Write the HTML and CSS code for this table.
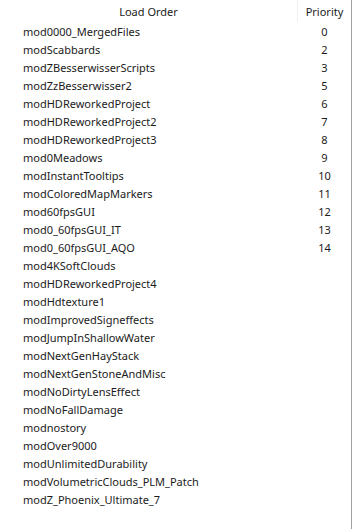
FILE: index.html
```html
<!DOCTYPE html>
<html>
<head>
<meta charset="utf-8">
<link rel="stylesheet" href="styles.css">
</head>
<body>
<div class="list">
  <div class="head">
    <div class="hcell name">Load Order</div>
    <div class="hcell prio">Priority</div>
  </div>
  <div class="rows">
    <div class="row"><span class="n">mod0000_MergedFiles</span><span class="p">0</span></div>
    <div class="row"><span class="n">modScabbards</span><span class="p">2</span></div>
    <div class="row"><span class="n">modZBesserwisserScripts</span><span class="p">3</span></div>
    <div class="row"><span class="n">modZzBesserwisser2</span><span class="p">5</span></div>
    <div class="row"><span class="n">modHDReworkedProject</span><span class="p">6</span></div>
    <div class="row"><span class="n">modHDReworkedProject2</span><span class="p">7</span></div>
    <div class="row"><span class="n">modHDReworkedProject3</span><span class="p">8</span></div>
    <div class="row"><span class="n">mod0Meadows</span><span class="p">9</span></div>
    <div class="row"><span class="n">modInstantTooltips</span><span class="p">10</span></div>
    <div class="row"><span class="n">modColoredMapMarkers</span><span class="p">11</span></div>
    <div class="row"><span class="n">mod60fpsGUI</span><span class="p">12</span></div>
    <div class="row"><span class="n">mod0_60fpsGUI_IT</span><span class="p">13</span></div>
    <div class="row"><span class="n">mod0_60fpsGUI_AQO</span><span class="p">14</span></div>
    <div class="row"><span class="n">mod4KSoftClouds</span><span class="p"></span></div>
    <div class="row"><span class="n">modHDReworkedProject4</span><span class="p"></span></div>
    <div class="row"><span class="n">modHdtexture1</span><span class="p"></span></div>
    <div class="row"><span class="n">modImprovedSigneffects</span><span class="p"></span></div>
    <div class="row"><span class="n">modJumpInShallowWater</span><span class="p"></span></div>
    <div class="row"><span class="n">modNextGenHayStack</span><span class="p"></span></div>
    <div class="row"><span class="n">modNextGenStoneAndMisc</span><span class="p"></span></div>
    <div class="row"><span class="n">modNoDirtyLensEffect</span><span class="p"></span></div>
    <div class="row"><span class="n">modNoFallDamage</span><span class="p"></span></div>
    <div class="row"><span class="n">modnostory</span><span class="p"></span></div>
    <div class="row"><span class="n">modOver9000</span><span class="p"></span></div>
    <div class="row"><span class="n">modUnlimitedDurability</span><span class="p"></span></div>
    <div class="row"><span class="n">modVolumetricClouds_PLM_Patch</span><span class="p"></span></div>
    <div class="row"><span class="n">modZ_Phoenix_Ultimate_7</span><span class="p"></span></div>
  </div>
</div>
</body>
</html>
```

FILE: styles.css
```css
html, body {
  margin: 0;
  padding: 0;
  background: #ffffff;
}
body {
  font-family: "Noto Sans", "Open Sans", sans-serif;
  font-size: 11px;
  color: #1b1b1b;
}
.list {
  width: 351px;
  height: 529px;
  border-right: 1px solid #a0a0a0;
  box-sizing: content-box;
}
.head {
  display: grid;
  grid-template-columns: 298px 1fr;
  height: 23px;
}
.hcell {
  display: flex;
  align-items: center;
  justify-content: center;
  height: 22px;
  line-height: 1;
}
.hcell.name {
  border-right: 1px solid #f0f0f0;
}
.rows {
  display: flex;
  flex-direction: column;
}
.row {
  display: grid;
  grid-template-columns: 298px 1fr;
  height: 18px;
  align-items: center;
  line-height: 18px;
}
.n {
  padding-left: 23px;
  white-space: nowrap;
}
.p {
  text-align: center;
}
```
